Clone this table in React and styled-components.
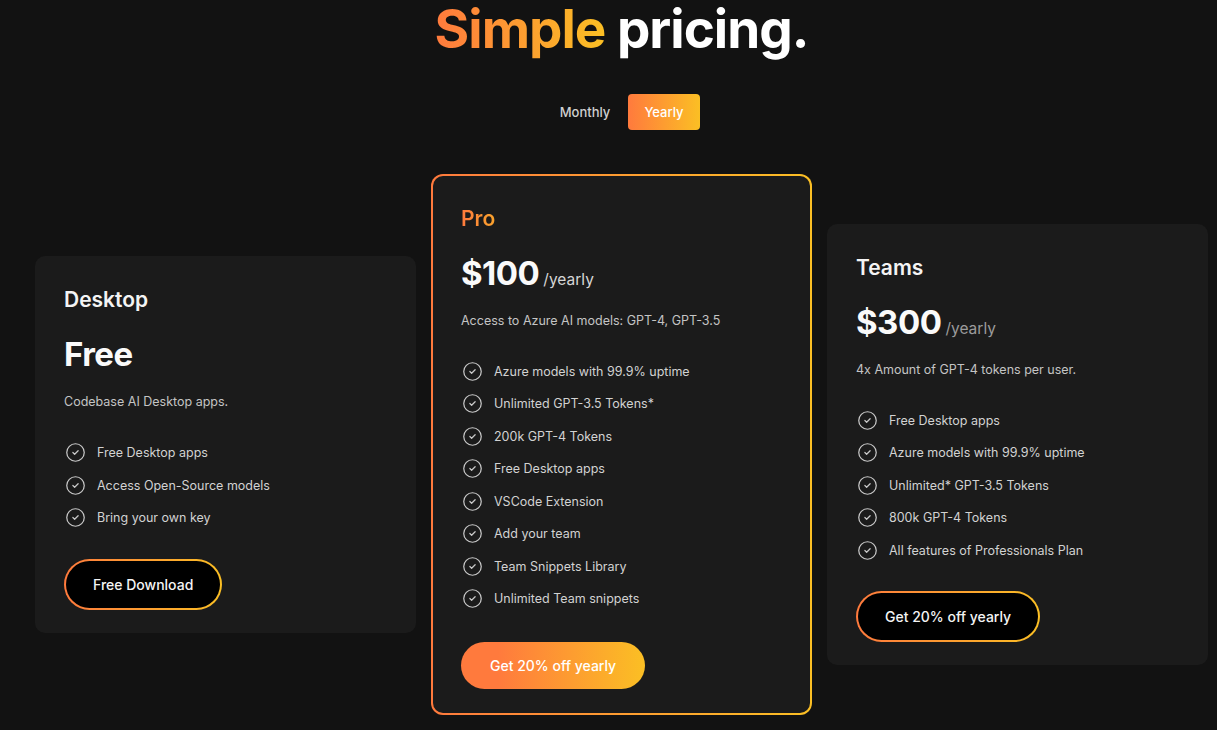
import React, { useState } from 'react';
import styled, { createGlobalStyle } from 'styled-components';
import { CircleCheck } from 'lucide-react';

const orange = '#ff7a3d';
const yellow = '#fbbf24';

const GlobalStyle = createGlobalStyle`
  html, body {
    margin: 0;
    padding: 0;
    background: #121212;
  }
  body {
    font-family: Inter, "Noto Sans", sans-serif;
    color: #f2f2f2;
    overflow: hidden;
  }
`;

const Page = styled.div`
  width: 1217px;
  height: 730px;
  box-sizing: border-box;
  padding-left: 26px;
  display: flex;
  flex-direction: column;
  align-items: center;
`;

const Title = styled.h1`
  margin: 0;
  font-size: 53px;
  line-height: 58px;
  font-weight: 700;
  letter-spacing: -1px;
  color: #fff;
`;

const Accent = styled.span`
  background: linear-gradient(90deg, ${orange}, ${yellow});
  -webkit-background-clip: text;
  background-clip: text;
  color: transparent;
`;

const Toggle = styled.div`
  display: flex;
  gap: 7px;
  margin: 36px 0 0 6px;
`;

const ToggleButton = styled.button`
  width: 72px;
  height: 36px;
  border: none;
  border-radius: 4px;
  font-family: inherit;
  font-size: 13px;
  font-weight: 500;
  cursor: pointer;
  color: ${p => (p.$active ? '#fff' : '#cfcfcf')};
  background: ${p => (p.$active ? `linear-gradient(90deg, ${orange}, ${yellow})` : 'transparent')};
`;

const Row = styled.div`
  display: flex;
  align-items: center;
  gap: 15px;
  margin-top: 44px;
`;

const Card = styled.div`
  width: 381px;
  box-sizing: border-box;
  padding: 29px 29px 23px;
  border-radius: 10px;
  background: #1b1b1b;
  display: flex;
  flex-direction: column;
  align-items: flex-start;
`;

const FeaturedCard = styled(Card)`
  padding: 28px 28px 24px;
  border: 2px solid transparent;
  border-radius: 12px;
  background:
    linear-gradient(#1b1b1b, #1b1b1b) padding-box,
    linear-gradient(90deg, ${orange}, ${yellow}) border-box;
`;

const PlanName = styled.h2`
  margin: 0;
  font-size: 21px;
  line-height: 30px;
  font-weight: 600;
  color: #f4f4f4;
`;

const ProName = styled(PlanName)`
  background: linear-gradient(90deg, ${orange}, #f9a22c);
  -webkit-background-clip: text;
  background-clip: text;
  color: transparent;
`;

const PriceRow = styled.div`
  display: flex;
  align-items: baseline;
  gap: 4px;
  margin-top: 17px;
  height: 44px;
`;

const Price = styled.span`
  font-size: 33px;
  line-height: 44px;
  font-weight: 700;
  letter-spacing: -0.5px;
  color: #fafafa;
`;

const Period = styled.span`
  font-size: 15.5px;
  color: ${p => (p.$muted ? '#9c9c9c' : '#d6d6d6')};
`;

const Description = styled.p`
  margin: 16px 0 0;
  font-size: 12.5px;
  line-height: 20px;
  color: #c4c4c4;
`;

const Features = styled.ul`
  list-style: none;
  margin: 24px 0 0;
  padding: 0;
`;

const Feature = styled.li`
  display: flex;
  align-items: center;
  gap: 11px;
  height: 32.5px;
  padding-left: 1px;
  font-size: 12.5px;
  color: #d2d2d2;

  svg {
    flex: none;
    color: #c9c9c9;
  }
`;

const OutlineButton = styled.button`
  margin-top: 25px;
  height: 51px;
  padding: 0 27px;
  border: 2px solid transparent;
  border-radius: 999px;
  font-family: inherit;
  font-size: 14px;
  font-weight: 500;
  color: #f4f4f4;
  cursor: pointer;
  background:
    linear-gradient(#000, #000) padding-box,
    linear-gradient(90deg, ${orange}, ${yellow}) border-box;
`;

const FilledButton = styled(OutlineButton)`
  margin-top: 27px;
  height: 47px;
  border: none;
  padding: 0 29px;
  background: linear-gradient(90deg, ${orange} 20%, ${yellow});
  color: #fff;
`;

const plans = {
  desktop: ['Free Desktop apps', 'Access Open-Source models', 'Bring your own key'],
  pro: [
    'Azure models with 99.9% uptime',
    'Unlimited GPT-3.5 Tokens*',
    '200k GPT-4 Tokens',
    'Free Desktop apps',
    'VSCode Extension',
    'Add your team',
    'Team Snippets Library',
    'Unlimited Team snippets',
  ],
  teams: [
    'Free Desktop apps',
    'Azure models with 99.9% uptime',
    'Unlimited* GPT-3.5 Tokens',
    '800k GPT-4 Tokens',
    'All features of Professionals Plan',
  ],
};

const FeatureList = ({ items }) => (
  <Features>
    {items.map(item => (
      <Feature key={item}>
        <CircleCheck size={21} strokeWidth={1.4} />
        {item}
      </Feature>
    ))}
  </Features>
);

const App = () => {
  const [yearly, setYearly] = useState(true);

  return (
    <>
      <GlobalStyle />
      <Page>
        <Title>
          <Accent>Simple</Accent> pricing.
        </Title>
        <Toggle>
          <ToggleButton $active={!yearly} onClick={() => setYearly(false)}>Monthly</ToggleButton>
          <ToggleButton $active={yearly} onClick={() => setYearly(true)}>Yearly</ToggleButton>
        </Toggle>
        <Row>
          <Card>
            <PlanName>Desktop</PlanName>
            <PriceRow>
              <Price>Free</Price>
            </PriceRow>
            <Description>Codebase AI Desktop apps.</Description>
            <FeatureList items={plans.desktop} />
            <OutlineButton>Free Download</OutlineButton>
          </Card>
          <FeaturedCard>
            <ProName>Pro</ProName>
            <PriceRow>
              <Price>$100</Price>
              <Period>/yearly</Period>
            </PriceRow>
            <Description>Access to Azure AI models: GPT-4, GPT-3.5</Description>
            <FeatureList items={plans.pro} />
            <FilledButton>Get 20% off yearly</FilledButton>
          </FeaturedCard>
          <Card>
            <PlanName>Teams</PlanName>
            <PriceRow>
              <Price>$300</Price>
              <Period $muted>/yearly</Period>
            </PriceRow>
            <Description>4x Amount of GPT-4 tokens per user.</Description>
            <FeatureList items={plans.teams} />
            <OutlineButton>Get 20% off yearly</OutlineButton>
          </Card>
        </Row>
      </Page>
    </>
  );
};

export default App;
